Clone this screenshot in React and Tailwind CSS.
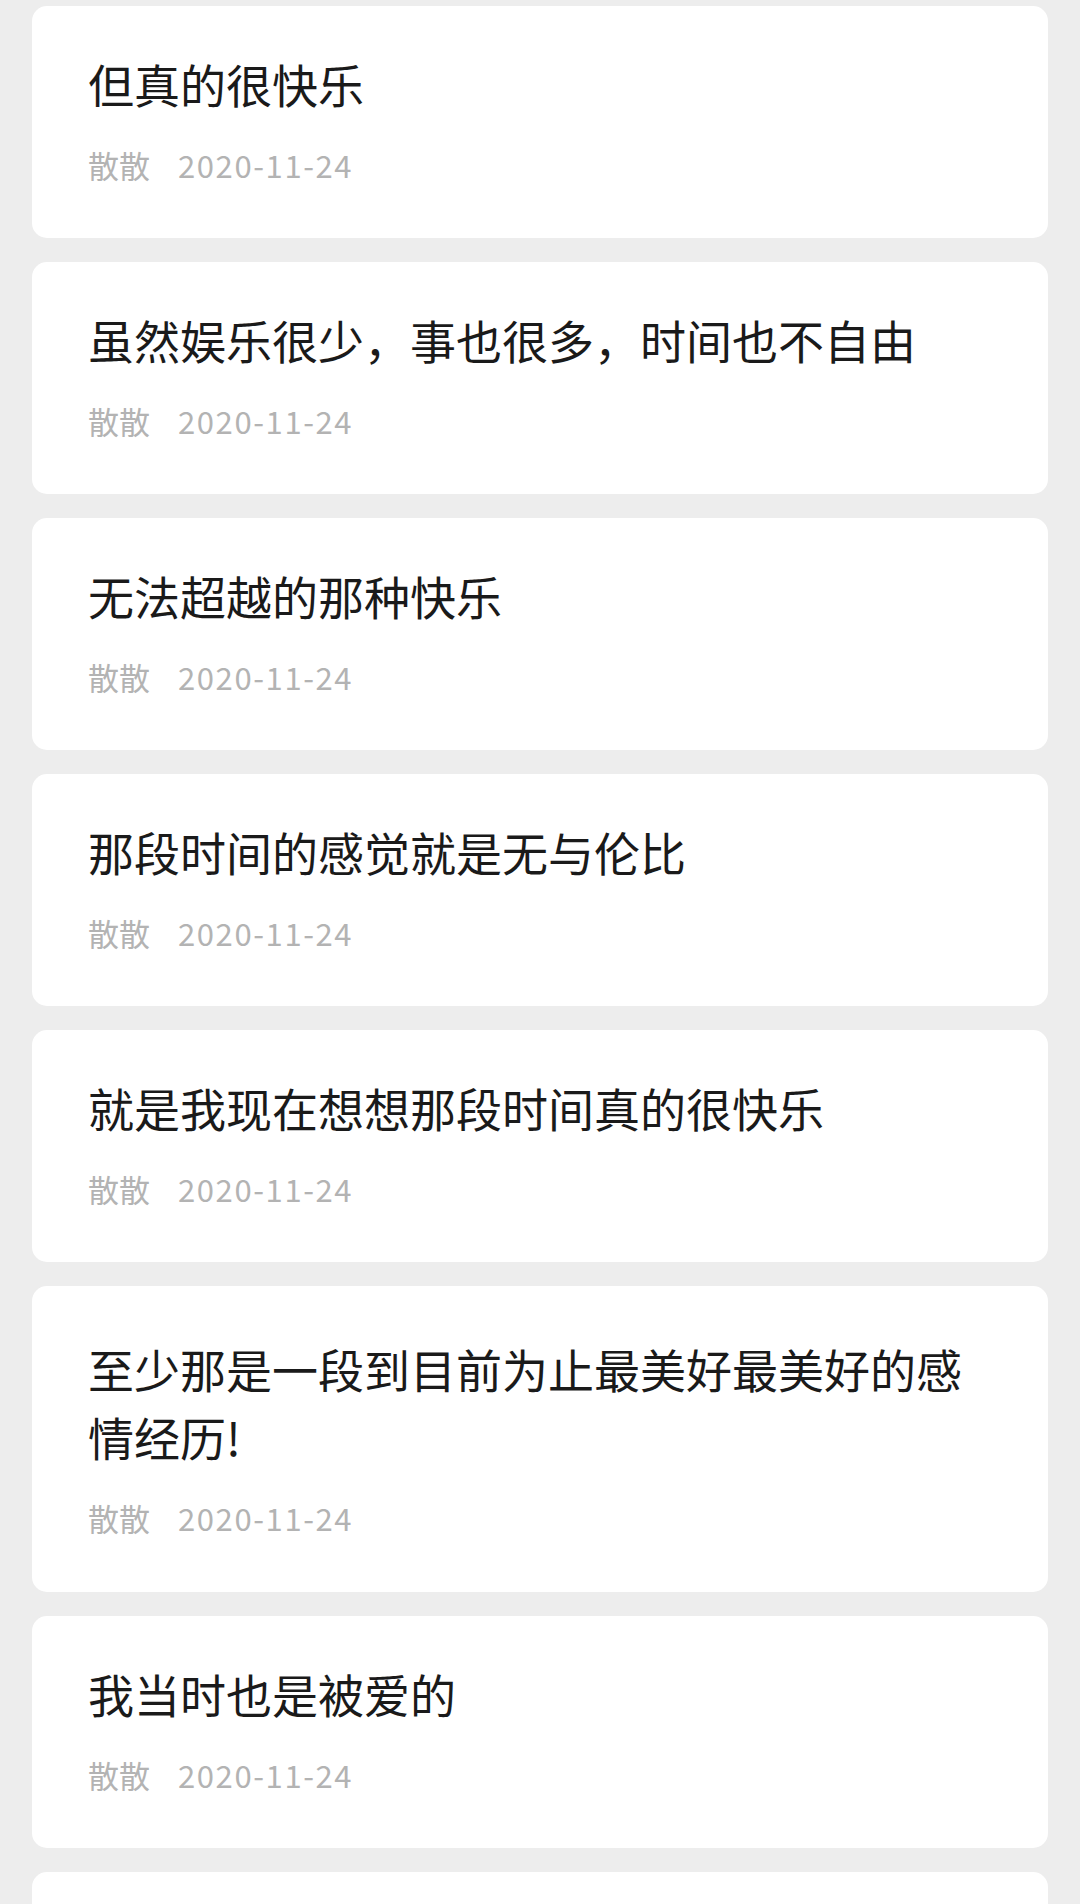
import React from "react";

const items = [
  { t: "但真的很快乐" },
  { t: "虽然娱乐很少，事也很多，时间也不自由" },
  { t: "无法超越的那种快乐" },
  { t: "那段时间的感觉就是无与伦比" },
  { t: "就是我现在想想那段时间真的很快乐" },
  { t: "至少那是一段到目前为止最美好最美好的感情经历!", tall: true },
  { t: "我当时也是被爱的" },
  { t: "那时候的我们什么都不怕" },
];

export default function App() {
  return (
    <div
      className="h-[1904px] overflow-hidden bg-[#ededed] pt-[6px] pl-[32px] pr-[32px] flex flex-col gap-[24px]"
      style={{ fontFamily: '"Noto Sans CJK SC", "Noto Sans", sans-serif' }}
    >
      {items.map((it, i) => (
        <div
          key={i}
          className={
            it.tall
              ? "shrink-0 bg-white rounded-[15px] flex flex-col pl-[56px] pr-[56px] pt-[48px] pb-[52px]"
              : "shrink-0 bg-white rounded-[15px] flex flex-col pl-[56px] pr-[56px] pt-[43px] pb-[51px]"
          }
        >
          <div className="text-[46px] leading-[68px] text-[#1a1a1a] font-normal">{it.t}</div>
          <div className="mt-[26px] flex items-center text-[31px] leading-[44px] text-[#b3b3b3]">
            <span>散散</span>
            <span className="ml-[28px] tracking-[1.6px]">2020-11-24</span>
          </div>
        </div>
      ))}
    </div>
  );
}
